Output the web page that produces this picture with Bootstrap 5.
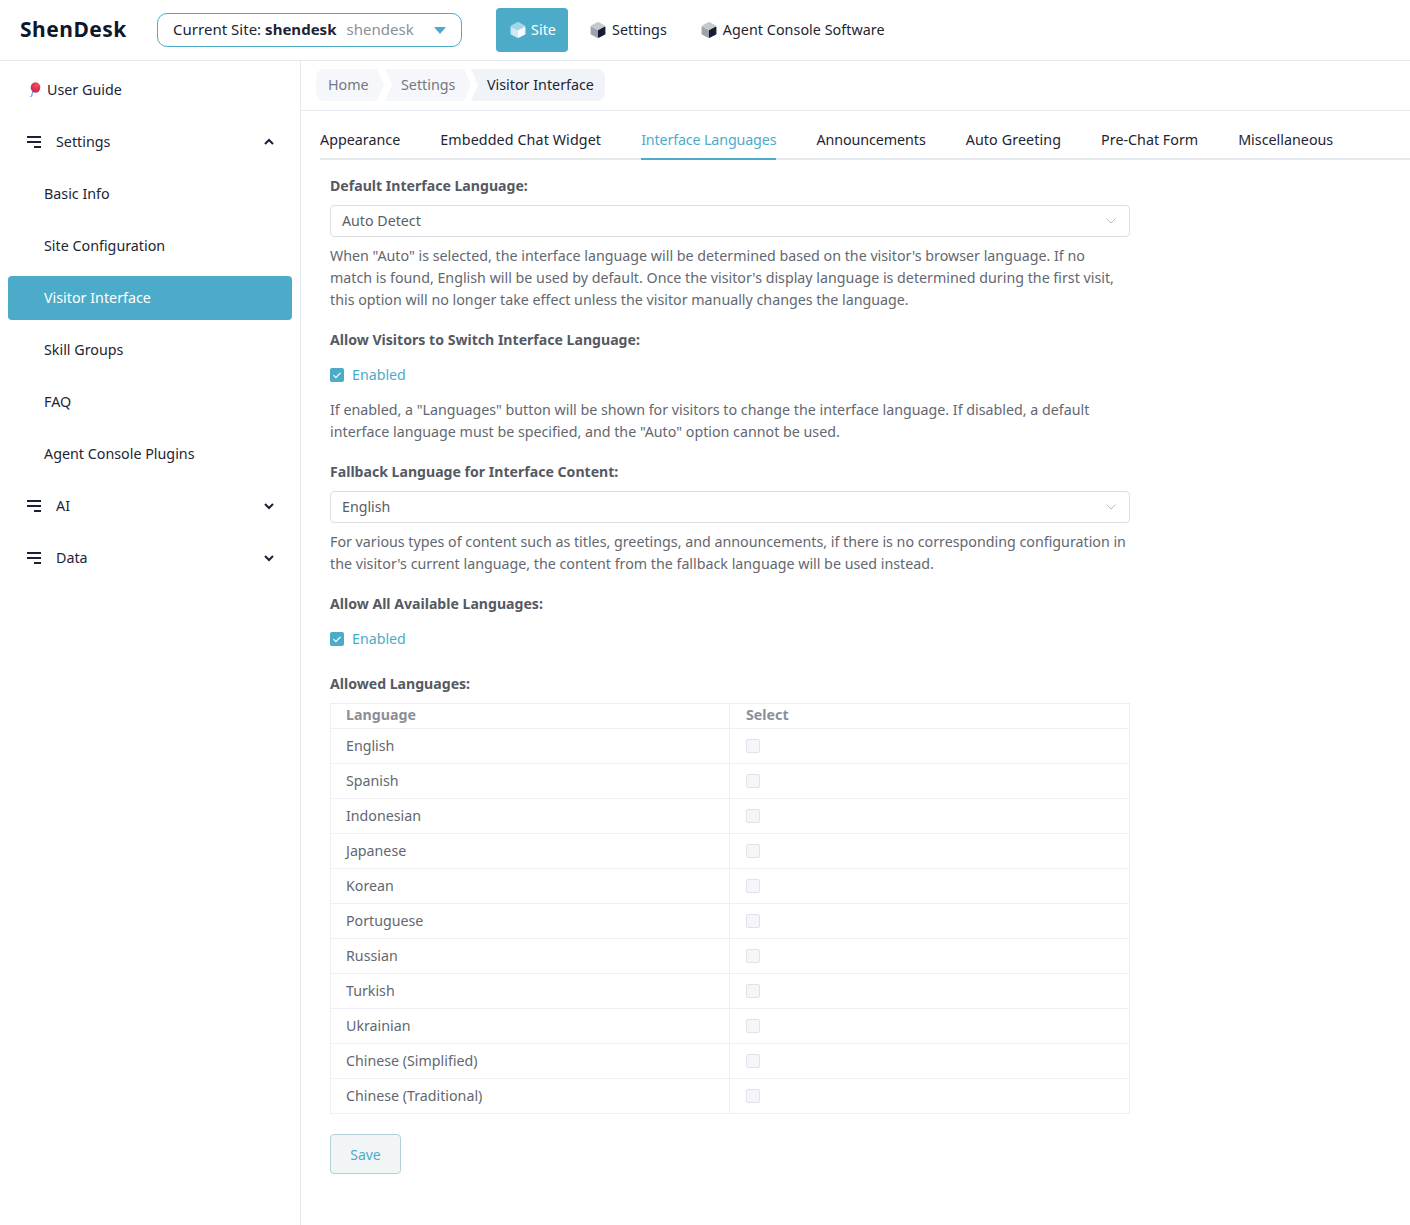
<!DOCTYPE html>
<html lang="en">
<head>
<meta charset="utf-8">
<title>ShenDesk</title>
<link href="https://cdn.jsdelivr.net/npm/bootstrap@5.3.0/dist/css/bootstrap.min.css" rel="stylesheet">
<style>
body{font-family:"Noto Sans","Open Sans","Liberation Sans",sans-serif;font-size:14.3px;color:#1e2433;background:#fff;line-height:22px}
.top-bar{height:61px;border-bottom:1px solid #e4e9f0}
.brand-name{width:157px;padding:0 0 3px 20px;font-size:21px;font-weight:700;letter-spacing:.5px;color:#0f1628}
.site-pick{width:305px;height:34px;border:1px solid #4dabca;border-radius:10px;padding:0 15px 2px;font-size:15px;letter-spacing:.02px}
.site-pick .dim{color:#8a8f99;margin-left:10px}
.caret-down{width:0;height:0;border-left:6px solid transparent;border-right:6px solid transparent;border-top:7px solid #4dabca;margin-left:auto;margin-right:0;margin-top:2px}
.top-links{margin-left:34px}
.top-link{height:44px;padding:0 12px 0 11px;border-radius:4px;color:#1e2433;margin-right:11px;text-decoration:none;gap:6px;letter-spacing:.05px}
.top-link.on{background:#4dabca;color:#fff;padding:0 0 0 14px;gap:5px;width:72px}
.shell{min-height:1164px}
.side-rail{width:301px;border-right:1px solid #e4e9f0;padding:7px 8px 0;flex:none}
.rail-item{height:44px;margin-bottom:8px;border-radius:4px;color:#1e2433;padding-left:36px;text-decoration:none}
.rail-item.on{background:#4dabca;color:#fff}
.rail-item.guide{padding-left:20px;gap:5px}
.rail-item.grp{padding-left:19px;padding-right:17px}
.rail-item.grp span{margin-left:14px}
.rail-item.grp .chev{margin-left:auto}
.crumb-row{height:50px;border-bottom:1px solid #e4e9f0;padding:8px 0 0 15px}
.crumb{height:32px;background:#f5f7fa;color:#737883;clip-path:polygon(0 0,calc(100% - 7px) 0,100% 50%,calc(100% - 7px) 100%,0 100%,7px 50%);padding-left:16px;text-decoration:none}
.crumb.first{border-radius:8px 0 0 8px;clip-path:polygon(0 0,calc(100% - 7px) 0,100% 50%,calc(100% - 7px) 100%,0 100%);padding-left:12px;width:68px;margin-right:1px}
.crumb.second{width:86px}
.crumb.last{width:134px;background:#f0f3f8;color:#1e2433;clip-path:polygon(0 0,100% 0,100% 100%,0 100%,7px 50%);border-radius:0 8px 8px 0}
.tab-strip{margin:9px 0 0 19px;height:40px;border-bottom:2px solid #e4e9f0;gap:40px}
.tab-link{height:40px;color:#1e2433;text-decoration:none;padding-top:9px}
.tab-link.on{color:#4dabca;border-bottom:2px solid #4dabca;letter-spacing:-.15px}
.tab-wide{letter-spacing:.1px}
.tab-tight{letter-spacing:-.08px}
.pane{width:800px;margin-left:29px;color:#63676f;font-size:14.22px}
.fld-label{font-weight:700;color:#555962;height:22px;margin-bottom:0;font-size:14.1px}
.fake-select{height:32px;border:1px solid #dcdfe6;border-radius:4px;padding:0 12px 0 11px;color:#5a5e66;background:#fff}
.fake-select svg{margin-left:auto}
.hint{margin:0;width:798px;font-size:14.26px}
.tick-row{color:#4dabca;height:22px;gap:8px}
.tick-box{width:14px;height:14px;background:#4dabca;border-radius:2px}
.pane .lang-table{width:800px;table-layout:fixed;border-color:#eeeff5;color:#63676f}
.pane .lang-table>:not(caption)>*>*{padding:0 0 0 15px;border-color:#eeeff5;color:#63676f;vertical-align:middle}
.pane .lang-table>:not(caption)>*>*:last-child{padding-left:16px}
.pane .lang-table>thead>tr>th{height:25px;padding-bottom:2px;font-weight:700;color:#8b8f98}
.pane .lang-table>thead>tr>th:first-child{width:399px}
.pane .lang-table>tbody>tr>td{height:35px}
.off-box{display:block;width:14px;height:14px;background:#f5f6fa;border:1px solid #e1e3ea;border-radius:2px}
.save-btn{width:71px;height:40px;background:#f2f5f5;border:1px solid #b3d1dc;border-radius:4px;color:#4dabca;font-size:14px;padding:0}
.mt-gap15{margin-top:15px}
.sel1{margin-top:8px}
.sel-hint{margin-top:8px}
.block-gap{margin-top:18px}
.tick-gap{margin-top:13px}
.tick-hint{margin-top:13px}
.table-gap{margin-top:23px}
.pane .lang-table{margin:8px 0 0}
.save-wrap{margin-top:20px}
</style>
</head>
<body>
<svg width="0" height="0" class="position-absolute"><defs><radialGradient id="bln" cx=".6" cy=".3" r=".8"><stop offset="0" stop-color="#f0505a"/><stop offset=".7" stop-color="#d42a4e"/><stop offset="1" stop-color="#a83a90"/></radialGradient></defs></svg>
<header class="top-bar d-flex align-items-center">
  <div class="brand-name">ShenDesk</div>
  <div class="site-pick d-flex align-items-center"><span>Current Site: <b>shendesk</b></span><span class="dim">shendesk</span><i class="caret-down"></i></div>
  <nav class="top-links d-flex align-items-center">
    <a href="#" class="top-link on d-flex align-items-center"><svg width="16" height="16" viewBox="1 1 14 14" stroke-linejoin="round"><path d="M8 1.500l5.800 3L8 7.500 2.200 4.500z" fill="#a6d6e6" stroke="#a6d6e6"/><path d="M2 5.500l5.500 2.900v6L2 11.500z" fill="#cfe9f2" stroke="#cfe9f2"/><path d="M8.500 8.400L14 5.500v6l-5.500 2.900z" fill="#f6fcfe" stroke="#f6fcfe"/></svg>Site</a>
    <a href="#" class="top-link d-flex align-items-center"><svg width="16" height="16" viewBox="1 1 14 14" stroke-linejoin="round"><path d="M8 1.500l5.800 3L8 7.500 2.200 4.500z" fill="#c6c8ce" stroke="#c6c8ce"/><path d="M2 5.500l5.500 2.900v6L2 11.500z" fill="#9fa2ac" stroke="#9fa2ac"/><path d="M8.500 8.400L14 5.500v6l-5.500 2.900z" fill="#161d30" stroke="#161d30"/></svg>Settings</a>
    <a href="#" class="top-link d-flex align-items-center"><svg width="16" height="16" viewBox="1 1 14 14" stroke-linejoin="round"><path d="M8 1.500l5.800 3L8 7.500 2.200 4.500z" fill="#c6c8ce" stroke="#c6c8ce"/><path d="M2 5.500l5.500 2.900v6L2 11.500z" fill="#9fa2ac" stroke="#9fa2ac"/><path d="M8.500 8.400L14 5.500v6l-5.500 2.900z" fill="#161d30" stroke="#161d30"/></svg>Agent Console Software</a>
  </nav>
</header>
<div class="shell d-flex">
  <aside class="side-rail">
    <a href="#" class="rail-item guide d-flex align-items-center"><svg width="14" height="16" viewBox="0 0 14 16"><ellipse cx="7.500" cy="5.500" rx="4.800" ry="5.200" fill="url(#bln)"/><path d="M5 10l-.8 1-.4 3-1.600.6" fill="none" stroke="#4a90e2" stroke-width="1"/></svg>User Guide</a>
    <a href="#" class="rail-item grp d-flex align-items-center"><svg width="15" height="12" viewBox="0 0 15 12"><path d="M0 1h14M0 6h14M7 11h7" stroke="#1a2133" stroke-width="2"/></svg><span>Settings</span><svg class="chev" width="12" height="8" viewBox="0 0 12 8"><path d="M2 6l4-4 4 4" fill="none" stroke="#1a2133" stroke-width="2"/></svg></a>
    <a href="#" class="rail-item d-flex align-items-center">Basic Info</a>
    <a href="#" class="rail-item d-flex align-items-center">Site Configuration</a>
    <a href="#" class="rail-item on d-flex align-items-center">Visitor Interface</a>
    <a href="#" class="rail-item d-flex align-items-center">Skill Groups</a>
    <a href="#" class="rail-item d-flex align-items-center">FAQ</a>
    <a href="#" class="rail-item d-flex align-items-center">Agent Console Plugins</a>
    <a href="#" class="rail-item grp d-flex align-items-center"><svg width="15" height="12" viewBox="0 0 15 12"><path d="M0 1h14M0 6h14M7 11h7" stroke="#1a2133" stroke-width="2"/></svg><span>AI</span><svg class="chev" width="12" height="8" viewBox="0 0 12 8"><path d="M2 2l4 4 4-4" fill="none" stroke="#1a2133" stroke-width="2"/></svg></a>
    <a href="#" class="rail-item grp d-flex align-items-center"><svg width="15" height="12" viewBox="0 0 15 12"><path d="M0 1h14M0 6h14M7 11h7" stroke="#1a2133" stroke-width="2"/></svg><span>Data</span><svg class="chev" width="12" height="8" viewBox="0 0 12 8"><path d="M2 2l4 4 4-4" fill="none" stroke="#1a2133" stroke-width="2"/></svg></a>
  </aside>
  <main class="flex-grow-1">
    <div class="crumb-row d-flex">
      <a href="#" class="crumb first d-flex align-items-center">Home</a>
      <a href="#" class="crumb second d-flex align-items-center">Settings</a>
      <span class="crumb last d-flex align-items-center">Visitor Interface</span>
    </div>
    <div class="tab-strip d-flex">
      <a href="#" class="tab-link">Appearance</a>
      <a href="#" class="tab-link tab-wide">Embedded Chat Widget</a>
      <a href="#" class="tab-link on">Interface Languages</a>
      <a href="#" class="tab-link tab-tight">Announcements</a>
      <a href="#" class="tab-link tab-wide">Auto Greeting</a>
      <a href="#" class="tab-link">Pre-Chat Form</a>
      <a href="#" class="tab-link">Miscellaneous</a>
    </div>
    <div class="pane d-flex flex-column">
      <label class="fld-label mt-gap15">Default Interface Language:</label>
      <div class="fake-select d-flex align-items-center sel1">Auto Detect<svg width="12" height="8" viewBox="0 0 12 8"><path d="M1.500 1.500L6 6l4.500-4.500" fill="none" stroke="#b6bac3" stroke-width="1"/></svg></div>
      <p class="hint sel-hint">When "Auto" is selected, the interface language will be determined based on the visitor's browser language. If no match is found, English will be used by default. Once the visitor's display language is determined during the first visit, this option will no longer take effect unless the visitor manually changes the language.</p>
      <label class="fld-label block-gap">Allow Visitors to Switch Interface Language:</label>
      <div class="tick-row d-flex align-items-center tick-gap"><svg class="tick-box" viewBox="0 0 14 14"><path d="M3.500 7.200l2.400 2.400 4.600-4.800" fill="none" stroke="#fff" stroke-width="1.200"/></svg>Enabled</div>
      <p class="hint tick-hint">If enabled, a "Languages" button will be shown for visitors to change the interface language. If disabled, a default interface language must be specified, and the "Auto" option cannot be used.</p>
      <label class="fld-label block-gap">Fallback Language for Interface Content:</label>
      <div class="fake-select d-flex align-items-center sel1">English<svg width="12" height="8" viewBox="0 0 12 8"><path d="M1.500 1.500L6 6l4.500-4.500" fill="none" stroke="#b6bac3" stroke-width="1"/></svg></div>
      <p class="hint sel-hint">For various types of content such as titles, greetings, and announcements, if there is no corresponding configuration in the visitor's current language, the content from the fallback language will be used instead.</p>
      <label class="fld-label block-gap">Allow All Available Languages:</label>
      <div class="tick-row d-flex align-items-center tick-gap"><svg class="tick-box" viewBox="0 0 14 14"><path d="M3.500 7.200l2.400 2.400 4.600-4.800" fill="none" stroke="#fff" stroke-width="1.200"/></svg>Enabled</div>
      <label class="fld-label table-gap">Allowed Languages:</label>
      <table class="table table-bordered lang-table">
        <thead><tr><th>Language</th><th>Select</th></tr></thead>
        <tbody>
          <tr><td>English</td><td><i class="off-box"></i></td></tr>
          <tr><td>Spanish</td><td><i class="off-box"></i></td></tr>
          <tr><td>Indonesian</td><td><i class="off-box"></i></td></tr>
          <tr><td>Japanese</td><td><i class="off-box"></i></td></tr>
          <tr><td>Korean</td><td><i class="off-box"></i></td></tr>
          <tr><td>Portuguese</td><td><i class="off-box"></i></td></tr>
          <tr><td>Russian</td><td><i class="off-box"></i></td></tr>
          <tr><td>Turkish</td><td><i class="off-box"></i></td></tr>
          <tr><td>Ukrainian</td><td><i class="off-box"></i></td></tr>
          <tr><td>Chinese (Simplified)</td><td><i class="off-box"></i></td></tr>
          <tr><td>Chinese (Traditional)</td><td><i class="off-box"></i></td></tr>
        </tbody>
      </table>
      <div class="save-wrap"><button type="button" class="btn save-btn">Save</button></div>
    </div>
  </main>
</div>
</body>
</html>
